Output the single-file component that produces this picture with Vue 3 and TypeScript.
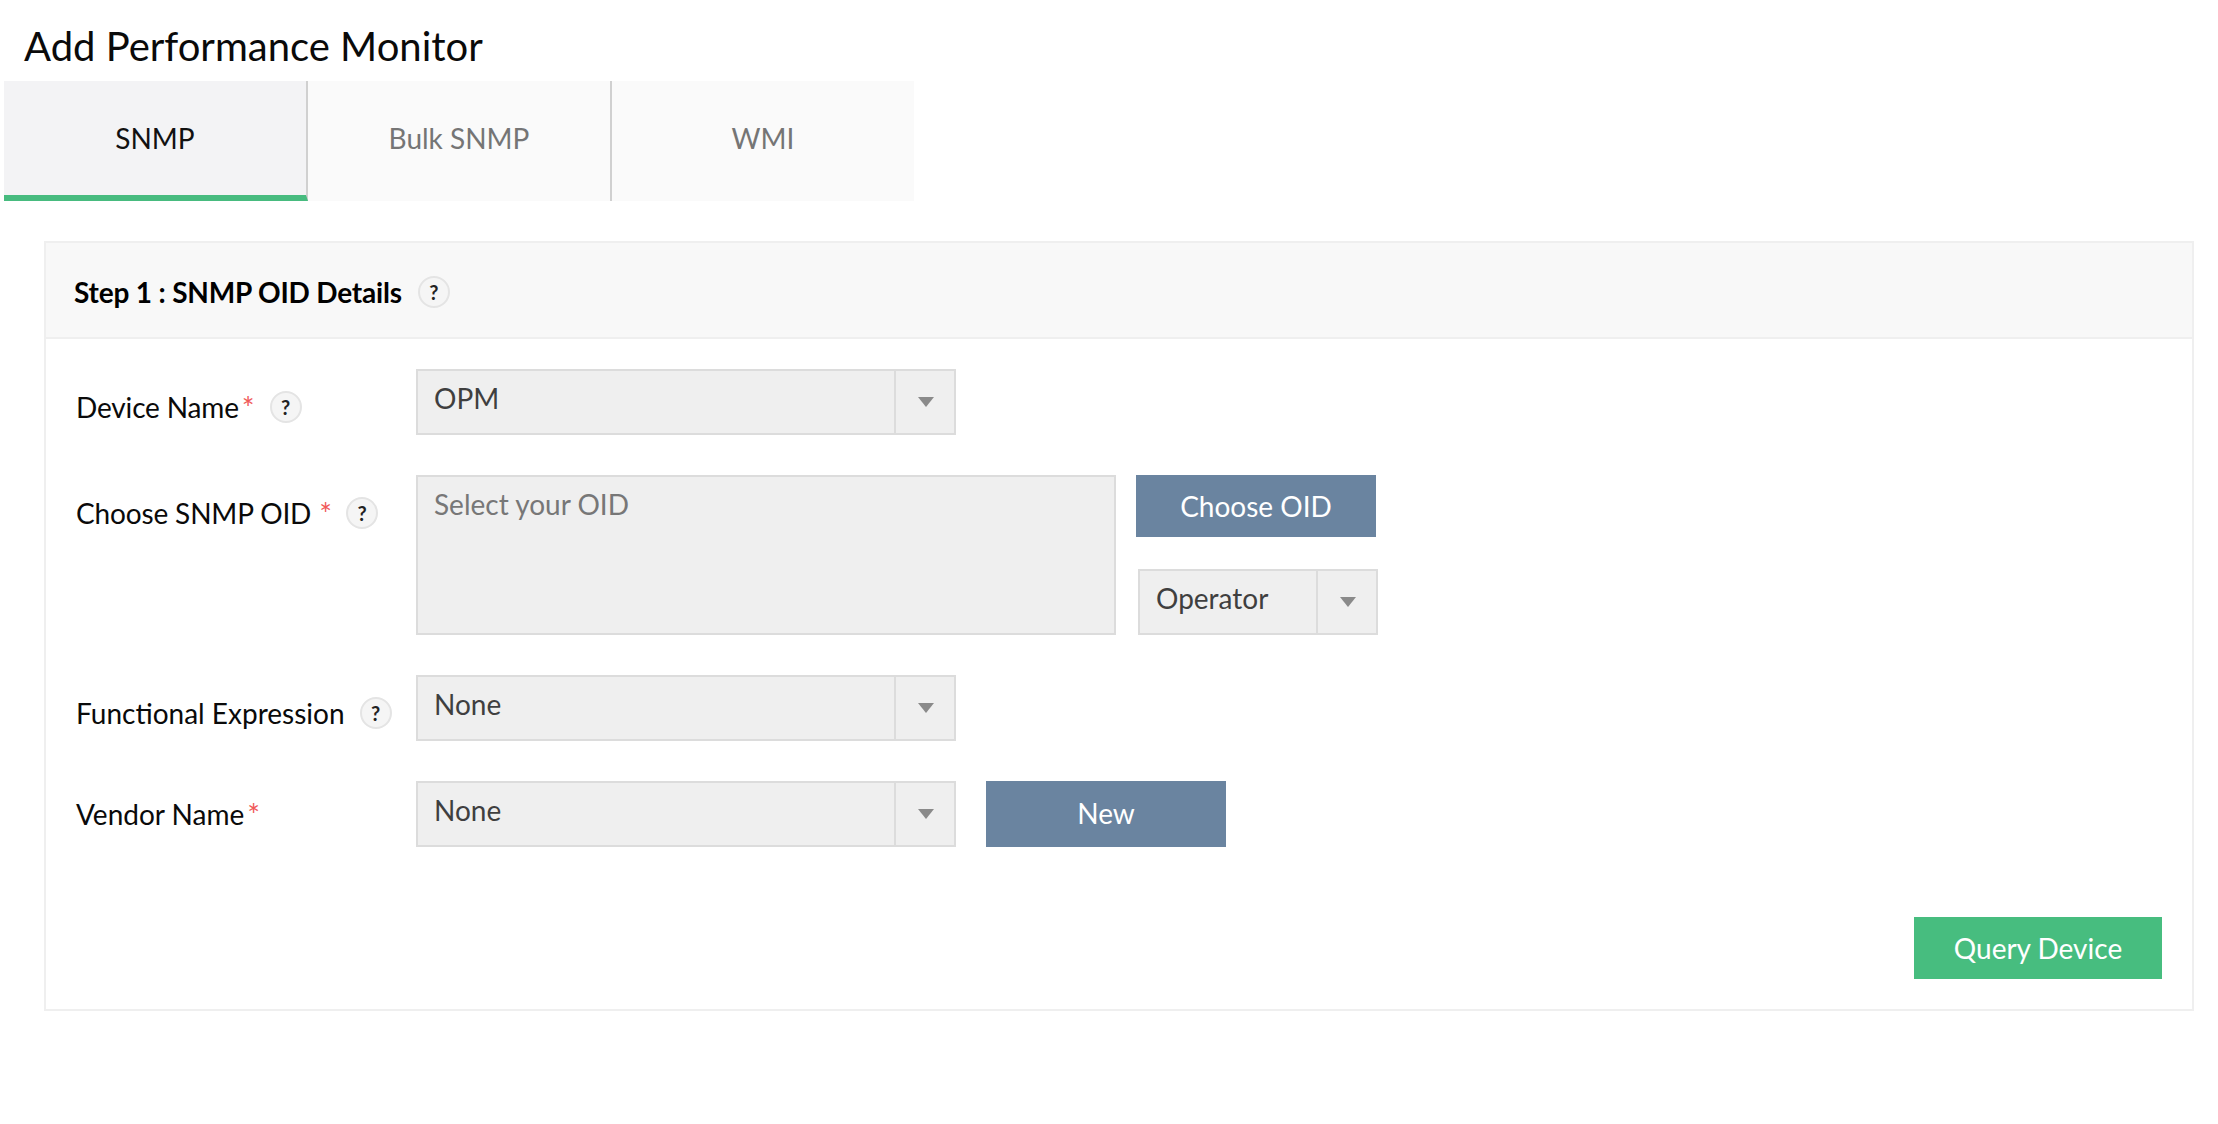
<script setup lang="ts">
interface Tab { name: string; active: boolean }
const tabs: Tab[] = [
  { name: 'SNMP', active: true },
  { name: 'Bulk SNMP', active: false },
  { name: 'WMI', active: false },
]
</script>

<template>
  <div class="page">
    <h1 class="title">Add Performance Monitor</h1>
    <div class="tabs">
      <div v-for="t in tabs" :key="t.name" class="tab" :class="{ active: t.active }">{{ t.name }}</div>
    </div>
    <section class="card">
      <header class="card-head">
        <span class="step">Step 1 : SNMP OID Details</span>
        <span class="help head-help">?</span>
      </header>
      <div class="form">
        <div class="row">
          <div class="label lab-1"><span class="tight">Device Name</span><span class="req r1">*</span><span class="help h1">?</span></div>
          <div class="select wide"><span class="val">OPM</span><span class="caret"><i></i></span></div>
        </div>
        <div class="row">
          <div class="label lab-1"><span class="tight">Choose SNMP OID</span><span class="req r2">*</span><span class="help h2">?</span></div>
          <div class="area">Select your OID</div>
          <div class="side">
            <button class="btn blue">Choose OID</button>
            <div class="select op"><span class="val">Operator</span><span class="caret"><i></i></span></div>
          </div>
        </div>
        <div class="row">
          <div class="label lab-1">Functional Expression<span class="help h3">?</span></div>
          <div class="select wide"><span class="val">None</span><span class="caret"><i></i></span></div>
        </div>
        <div class="row">
          <div class="label lab-2">Vendor Name<span class="req r1">*</span></div>
          <div class="select wide"><span class="val">None</span><span class="caret"><i></i></span></div>
          <button class="btn blue new">New</button>
        </div>
      </div>
      <div class="foot"><button class="btn green">Query Device</button></div>
    </section>
  </div>
</template>

<style>
html, body { margin: 0; background: #fff; }
</style>

<style scoped>
.page {
  font-family: Lato, "Open Sans", sans-serif;
  color: #000;
  height: 1124px;
  box-sizing: border-box;
  overflow: hidden;
}
.title {
  margin: 0;
  padding-left: 24px;
  height: 81px;
  box-sizing: border-box;
  padding-top: 19px;
  font-size: 40px;
  line-height: 54px;
  font-weight: 400;
  color: #0a0a0a;
}
.tabs { display: flex; margin-left: 4px; }
.tab {
  width: 304px;
  height: 120px;
  box-sizing: border-box;
  padding-bottom: 6px;
  display: flex;
  align-items: center;
  justify-content: center;
  font-size: 28px;
  background: #fafafa;
  color: #757575;
  border-right: 2px solid #d0d0d0;
}
.tab:last-child { border-right: 0; width: 302px; }
.tab.active {
  background: #f3f3f5;
  color: #111;
  border-bottom: 6px solid #47bb7f;
  padding-bottom: 0;
}
.card {
  margin: 40px 24px 0 44px;
  border: 2px solid #efefef;
  height: 770px;
  box-sizing: border-box;
}
.card-head {
  height: 96px;
  box-sizing: border-box;
  background: #f8f8f8;
  border-bottom: 2px solid #efefef;
  display: flex;
  align-items: center;
  padding: 4px 0 0 28px;
}
.step { font-size: 28px; font-weight: 700; color: #000; letter-spacing: -0.18px; }
.help {
  display: inline-flex;
  align-items: center;
  justify-content: center;
  width: 32px;
  height: 32px;
  box-sizing: border-box;
  border-radius: 50%;
  border: 2px solid #e4e4e4;
  background: #f5f5f5;
  font-size: 20px;
  font-weight: 700;
  color: #222;
}
.head-help { margin-left: 16px; }
.form {
  padding: 30px 0 0 30px;
  display: flex;
  flex-direction: column;
  gap: 40px;
}
.row { display: flex; align-items: flex-start; }
.label {
  width: 340px;
  flex: none;
  display: flex;
  align-items: center;
  font-size: 28px;
  color: #0a0a0a;
  height: 36px;
}
.tight { letter-spacing: -0.15px; }
.lab-1 { margin-top: 20px; }
.lab-2 { margin-top: 15px; }
.req {
  color: #f05a5a;
  font-size: 30px;
  align-self: flex-start;
  line-height: 36px;
  margin-left: 3px;
}
.r2 { margin-left: 8px; }
.h1 { margin-left: 15px; }
.h2 { margin-left: 14px; }
.h3 { margin-left: 15px; }
.select {
  display: flex;
  box-sizing: border-box;
  height: 66px;
  background: #efefef;
  border: 2px solid #dcdcdc;
  font-size: 28px;
  color: #3f3f3f;
}
.wide { width: 540px; }
.val { flex: 1; padding: 9px 0 0 16px; line-height: 36px; }
.caret {
  width: 60px;
  flex: none;
  border-left: 2px solid #dcdcdc;
  display: flex;
  align-items: center;
  justify-content: center;
  padding-left: 2px;
  box-sizing: border-box;
}
.caret i {
  width: 0;
  height: 0;
  border-left: 8px solid transparent;
  border-right: 8px solid transparent;
  border-top: 10px solid #8a8a8a;
}
.area {
  width: 700px;
  height: 160px;
  box-sizing: border-box;
  background: #efefef;
  border: 2px solid #dcdcdc;
  padding: 9px 16px;
  line-height: 36px;
  font-size: 28px;
  color: #777;
}
.side { margin-left: 20px; display: flex; flex-direction: column; }
.btn {
  border: 0;
  display: block;
  font-family: inherit;
  color: #fff;
  font-size: 28px;
  width: 240px;
  padding: 0;
}
.blue { background: #6a84a0; height: 62px; }
.op { width: 240px; margin: 32px 0 0 2px; }
.new { margin-left: 30px; height: 66px; padding-bottom: 2px; }
.foot { display: flex; justify-content: flex-end; padding: 70px 30px 0 0; }
.green { background: #47bd7f; width: 248px; height: 62px; }
</style>
